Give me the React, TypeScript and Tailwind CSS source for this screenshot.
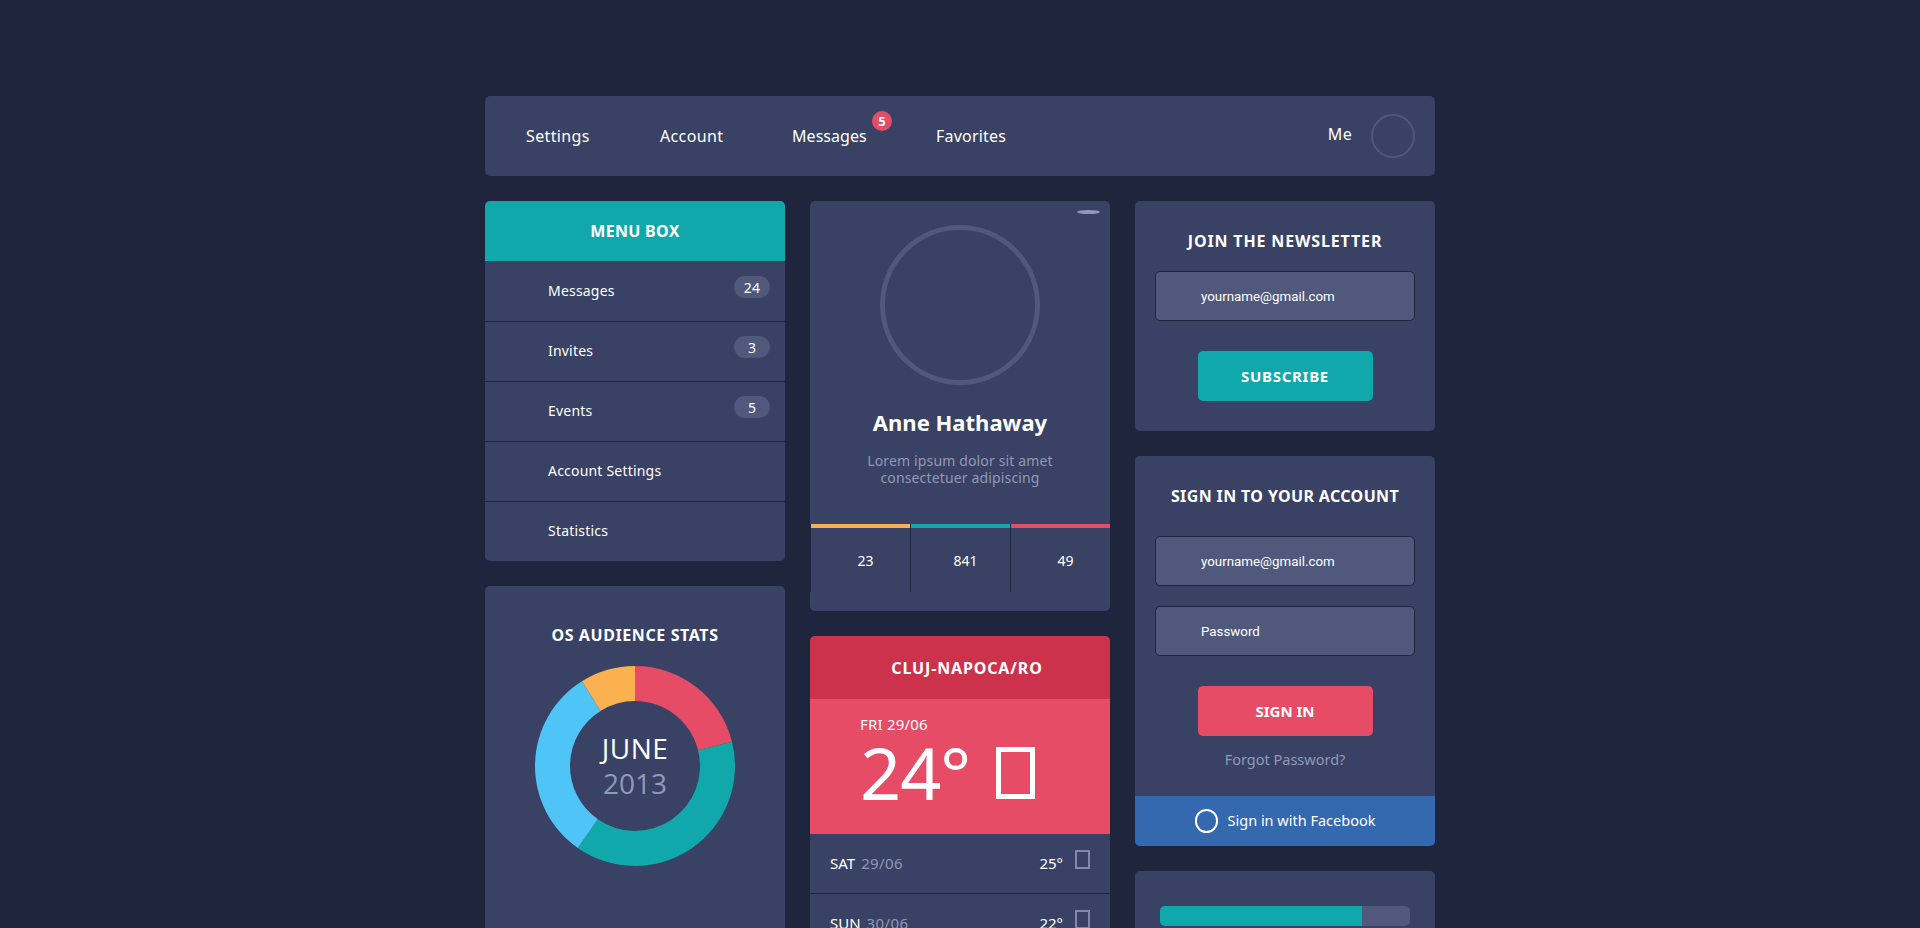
import React from "react";

const font = { fontFamily: '"Noto Sans", "Liberation Sans", sans-serif' };

function polar(r: number, a: number) {
  const t = ((a - 90) * Math.PI) / 180;
  return [100 + r * Math.cos(t), 100 + r * Math.sin(t)];
}
function wedge(a: number, b: number) {
  const [x1, y1] = polar(100, a);
  const [x2, y2] = polar(100, b);
  const [x3, y3] = polar(65, b);
  const [x4, y4] = polar(65, a);
  const l = b - a > 180 ? 1 : 0;
  return `M${x1} ${y1}A100 100 0 ${l} 1 ${x2} ${y2}L${x3} ${y3}A65 65 0 ${l} 0 ${x4} ${y4}Z`;
}

function Donut() {
  return (
    <svg width="200" height="200" viewBox="0 0 200 200" className="block">
      <path d={wedge(0, 75.9)} fill="#e64c65" />
      <path d={wedge(75.9, 214.9)} fill="#11a8ab" />
      <path d={wedge(214.9, 328)} fill="#4fc4f6" />
      <path d={wedge(328, 360)} fill="#fcb150" />
    </svg>
  );
}

function Nav() {
  const items: [string, string][] = [
    ["Settings", "w-[134px] tracking-[0.35px]"],
    ["Account", "w-[132px] tracking-[0.35px]"],
    ["Messages", "w-[144px] tracking-[0.05px]"],
    ["Favorites", "w-[100px] tracking-[0.2px]"],
  ];
  return (
    <div className="flex h-20 items-center justify-between rounded-[5px] bg-[#394264] pl-[41px] pr-5">
      <div className="flex">
        {items.map(([t, w]) => (
          <div key={t} className={`relative text-[16px] leading-6 text-white ${w}`}>
            {t}
            {t === "Messages" && (
              <span className="absolute left-[80px] top-[-13px] flex h-5 w-5 items-center justify-center rounded-full bg-[#e64c65] text-[13px] font-bold tracking-normal text-white">
                5
              </span>
            )}
          </div>
        ))}
      </div>
      <div className="flex items-center gap-[19px]">
        <span className="mb-[4px] text-[16px] leading-6 tracking-[0.3px] text-white">Me</span>
        <span className="h-11 w-11 rounded-full border-2 border-[#50597b]" />
      </div>
    </div>
  );
}

function Menu() {
  const rows: [string, string | null][] = [
    ["Messages", "24"],
    ["Invites", "3"],
    ["Events", "5"],
    ["Account Settings", null],
    ["Statistics", null],
  ];
  return (
    <div className="overflow-hidden rounded-[5px] bg-[#394264]">
      <div className="flex h-[60px] items-center justify-center bg-[#11a8ab] text-[16px] font-bold tracking-[0.3px] text-white">MENU BOX</div>
      {rows.map(([t, b], i) => (
        <div key={t} className={`relative flex h-[60px] items-center pb-[2px] pl-[63px] text-[14px] tracking-[0.2px] text-white ${i > 0 ? "border-t border-[#1f253d]" : ""}`}>
          {t}
          {b && (
            <span className={`absolute right-[15px] flex h-[22px] w-9 items-center justify-center rounded-full bg-[#50597b] text-[14px] ${i > 0 ? "top-[14px]" : "top-[15px]"}`}>
              {b}
            </span>
          )}
        </div>
      ))}
    </div>
  );
}

function Stats() {
  return (
    <div className="h-[500px] rounded-[5px] bg-[#394264] pt-[37px]">
      <div className="text-center text-[16px] font-bold leading-6 tracking-[0.6px] text-white">OS AUDIENCE STATS</div>
      <div className="relative mx-auto mt-[19px] h-[200px] w-[200px]">
        <Donut />
        <div className="absolute inset-0 flex flex-col items-center justify-center text-[28px] leading-[35px]" style={{ fontFamily: '"Open Sans", sans-serif' }}>
          <span className="tracking-[0.5px] text-white">JUNE</span>
          <span className="text-[#9099b7]">2013</span>
        </div>
      </div>
    </div>
  );
}

function Profile() {
  const cells: [string, string][] = [
    ["23", "border-[#fcb150]"],
    ["841", "border-[#11a8ab]"],
    ["49", "border-[#e64c65]"],
  ];
  return (
    <div className="relative h-[410px] rounded-[5px] bg-[#394264]">
      <span className="absolute right-[10px] top-[9px] h-[4px] w-[23px] rounded-[50%] bg-[#9099b7]" />
      <div className="flex justify-center pt-[24px]">
        <span className="h-40 w-40 rounded-full border-[5px] border-[#50597b]" />
      </div>
      <div className="mt-[21px] text-center text-[22px] font-bold leading-[32px] text-white">Anne Hathaway</div>
      <div className="mt-[14px] text-center text-[14px] leading-[17px] tracking-[0.15px] text-[#9099b7]">
        Lorem ipsum dolor sit amet
        <br />
        consectetuer adipiscing
      </div>
      <div className="mt-[38px] flex">
        {cells.map(([n, c]) => (
          <div key={n} className="w-[100px] border-l border-[#1f253d]">
            <div className={`border-t-4 ${c}`} />
            <div className="flex h-[64px] items-center justify-center pl-[10px] text-[14px] text-white">{n}</div>
          </div>
        ))}
      </div>
    </div>
  );
}

function Tofu() {
  return <span className="h-[19px] w-[15px] border-2 border-[#7e8aaf]" />;
}

function Weather() {
  const rows: [string, string, string][] = [
    ["SAT", "29/06", "25°"],
    ["SUN", "30/06", "22°"],
    ["MON", "01/07", "26°"],
  ];
  return (
    <div className="overflow-hidden rounded-[5px] bg-[#394264]">
      <div className="flex h-[63px] items-center justify-center bg-[#cc324b] pl-[14px] text-[16px] font-bold tracking-[0.85px] text-white">CLUJ-NAPOCA/RO</div>
      <div className="h-[135px] bg-[#e64c65] pl-[50px] pt-[14px] text-white">
        <div className="text-[15px] leading-[22px] tracking-[0.2px]">FRI 29/06</div>
        <div className="mt-[2px] flex items-center">
          <span className="text-[72px] leading-[70px] tracking-[-1px]">24°</span>
          <span className="ml-[26px] mt-[2px] h-[52px] w-[39px] border-[5px] border-white" />
        </div>
      </div>
      {rows.map(([d, n, t]) => (
        <div key={d} className="relative flex h-[60px] items-center border-b border-[#1f253d] pl-5 pr-5 text-[15px]">
          <span className="text-white">{d}</span>
          <span className="ml-[6px] tracking-[0.4px] text-[#9099b7]">{n}</span>
          <span className="ml-auto flex items-center gap-[12px] text-white">
            {t}
            <span className="mb-[8px] flex">
              <Tofu />
            </span>
          </span>
        </div>
      ))}
    </div>
  );
}

function Field({ text }: { text: string }) {
  return (
    <div
      className="flex h-[50px] items-center rounded-[5px] border border-[#1f253d] bg-[#50597b] pl-[45px] pt-[1px] text-[13.33px] text-white"
      style={{ fontFamily: "Roboto, sans-serif" }}
    >
      {text}
    </div>
  );
}

function Newsletter() {
  return (
    <div className="h-[230px] rounded-[5px] bg-[#394264] px-5 pt-[28px]">
      <div className="text-center text-[16px] font-bold leading-6 tracking-[0.85px] text-white">JOIN THE NEWSLETTER</div>
      <div className="mt-[18px]">
        <Field text="yourname@gmail.com" />
      </div>
      <div className="mx-auto mt-[30px] flex h-[50px] w-[175px] items-center justify-center rounded-[5px] bg-[#11a8ab] text-[15px] font-bold tracking-[0.7px] text-white">SUBSCRIBE</div>
    </div>
  );
}

function SignIn() {
  return (
    <div className="overflow-hidden rounded-[5px] bg-[#394264]">
      <div className="h-[340px] px-5 pt-[28px]">
        <div className="text-center text-[16px] font-bold leading-6 tracking-[0.37px] text-white">SIGN IN TO YOUR ACCOUNT</div>
        <div className="mt-[28px]">
          <Field text="yourname@gmail.com" />
        </div>
        <div className="mt-[20px]">
          <Field text="Password" />
        </div>
        <div className="mx-auto mt-[30px] flex h-[50px] w-[175px] items-center justify-center rounded-[5px] bg-[#e64c65] text-[15px] font-bold text-white">SIGN IN</div>
        <div className="mt-[12px] text-center text-[14.5px] leading-[22px] text-[#9099b7]">Forgot Password?</div>
      </div>
      <div className="flex h-[50px] items-center justify-center gap-[10px] bg-[#3468af] text-[14.5px] text-white">
        <span className="h-6 w-[23px] rounded-full border-2 border-white" />
        Sign in with Facebook
      </div>
    </div>
  );
}

function Progress() {
  return (
    <div className="h-[200px] rounded-[5px] bg-[#394264] px-[25px] pt-[35px]">
      <div className="h-5 overflow-hidden rounded-[5px] bg-[#50597b]">
        <div className="h-5 w-[202px] bg-[#11a8ab]" />
      </div>
    </div>
  );
}

export default function App() {
  return (
    <div className="h-screen overflow-hidden bg-[#1f253d] pt-24" style={font}>
      <div className="mx-auto w-[950px]">
        <Nav />
        <div className="mt-[25px] flex gap-[25px]">
          <div className="flex w-[300px] flex-col gap-[25px]">
            <Menu />
            <Stats />
          </div>
          <div className="flex w-[300px] flex-col gap-[25px]">
            <Profile />
            <Weather />
          </div>
          <div className="flex w-[300px] flex-col gap-[25px]">
            <Newsletter />
            <SignIn />
            <Progress />
          </div>
        </div>
      </div>
    </div>
  );
}
